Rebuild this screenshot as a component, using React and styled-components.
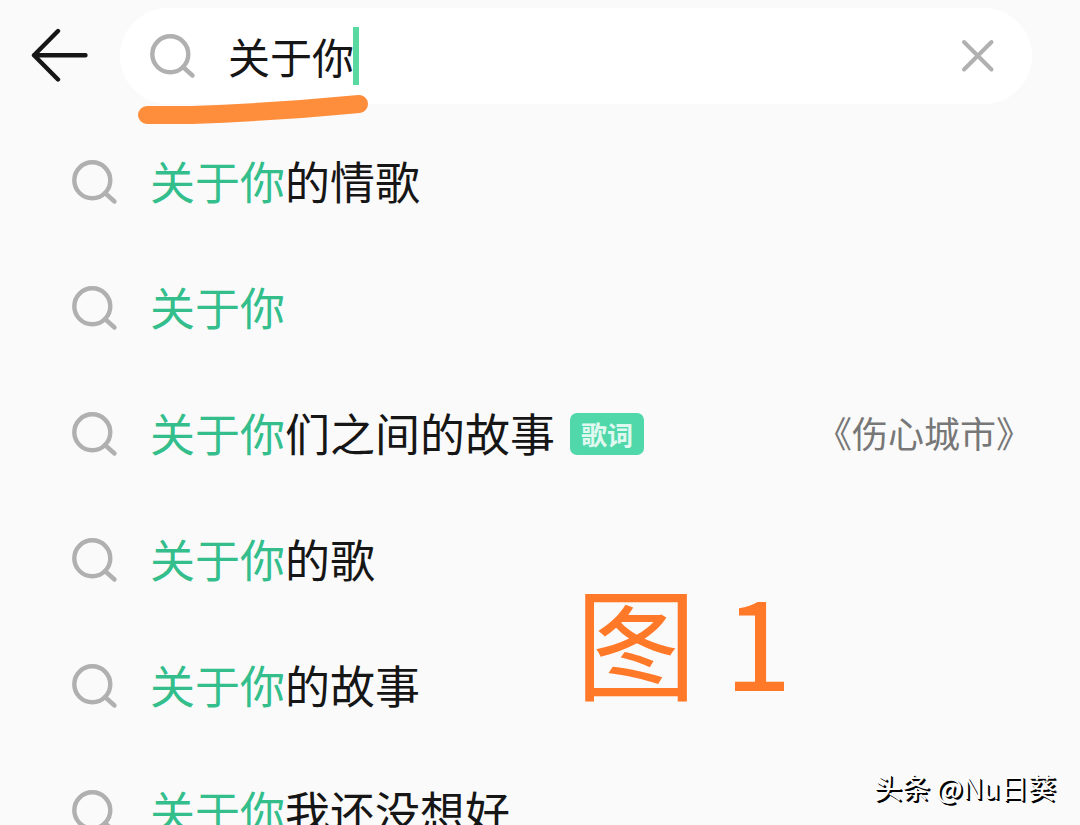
import React, { useState } from 'react';
import styled, { createGlobalStyle } from 'styled-components';

const GlobalStyle = createGlobalStyle`
  * {
    box-sizing: border-box;
  }

  body {
    margin: 0;
    background: #fafafa;
    color: #161616;
    font-family: "Noto Sans CJK SC", "Noto Sans", sans-serif;
  }
`;

const Page = styled.div`
  position: relative;
  height: 100vh;
  overflow: hidden;
`;

const Header = styled.header`
  display: flex;
  align-items: center;
  gap: 30px;
  padding: 8px 48px 15px 30px;
`;

const IconButton = styled.button`
  display: flex;
  padding: 0;
  border: 0;
  background: none;
  cursor: pointer;
`;

const SearchBox = styled.form`
  display: flex;
  flex: 1;
  align-items: center;
  height: 96px;
  padding: 0 36px 0 28px;
  border-radius: 48px;
  background: #fff;
`;

const Field = styled.label`
  display: flex;
  flex: 1;
  align-items: center;
  gap: 32px;
`;

const Typed = styled.span`
  display: flex;
  align-items: center;
`;

const SearchInput = styled.input`
  width: ${props => props.$chars}em;
  height: 60px;
  padding: 0 0 2px;
  border: 0;
  outline: 0;
  background: none;
  color: inherit;
  font: inherit;
  font-size: 42px;
  caret-color: transparent;
`;

const Caret = styled.span`
  width: 6px;
  height: 58px;
  margin-left: -1px;
  background: #57d9a0;
`;

const List = styled.ul`
  margin: 0;
  padding: 0;
  list-style: none;
`;

const Row = styled.a`
  display: flex;
  align-items: center;
  height: 126px;
  padding: 0 48px 0 70px;
  color: inherit;
  text-decoration: none;
`;

const Title = styled.span`
  margin-left: 32px;
  padding-bottom: 2px;
  font-size: 45px;
  line-height: 64px;
  white-space: nowrap;
`;

const Match = styled.span`
  color: #34be8c;
`;

const Badge = styled.span`
  margin-left: 15px;
  padding: 0 11px;
  border-radius: 7px;
  background: #50d8ab;
  color: #e0f9f0;
  font-size: 26px;
  font-weight: 700;
  line-height: 42px;
`;

const Song = styled.span`
  margin-left: auto;
  padding-bottom: 4px;
  color: #777;
  font-size: 36px;
  line-height: 52px;
`;

const Stroke = styled.svg`
  position: absolute;
  top: 92px;
  left: 136px;
`;

const Caption = styled.div`
  position: absolute;
  top: 550px;
  left: 575px;
  color: #ff7928;
  font-size: 122px;
  line-height: 176px;
  white-space: nowrap;
`;

const Watermark = styled.div`
  position: absolute;
  right: 24px;
  bottom: 18px;
  color: #fff;
  font-size: 28px;
  line-height: 40px;
  text-shadow: 1px 1px 0 #000, 2px 2px 0 #000;
`;

const SearchIcon = () => (
  <svg width="48" height="48" viewBox="0 0 48 48" fill="none" stroke="#b0b0b0" strokeWidth="4.4" aria-hidden="true">
    <circle cx="22.3" cy="22.3" r="18" />
    <path d="M35 35 44.500 43.500" strokeLinecap="round" />
  </svg>
);

const BackIcon = () => (
  <svg width="60" height="56" viewBox="0 0 60 56" fill="none" stroke="#161616" strokeWidth="4.4" strokeLinecap="round" strokeLinejoin="round" aria-hidden="true">
    <path d="M28 3 4 27.3 28 51.5M4 27.3H55.5" />
  </svg>
);

const ClearIcon = () => (
  <svg width="36" height="36" viewBox="0 0 36 36" fill="none" stroke="#b0b0b0" strokeWidth="4" strokeLinecap="round" aria-hidden="true">
    <path d="M4 4 31.5 31.5M31.5 4 4 31.5" />
  </svg>
);

const keyword = '关于你';

const suggestions = [
  { rest: '的情歌' },
  { rest: '' },
  { rest: '们之间的故事', badge: '歌词', song: '《伤心城市》' },
  { rest: '的歌' },
  { rest: '的故事' },
  { rest: '我还没想好' },
];

const App = () => {
  const [query, setQuery] = useState(keyword);

  return (
    <Page>
      <GlobalStyle />
      <Header>
        <IconButton type="button" aria-label="返回">
          <BackIcon />
        </IconButton>
        <SearchBox onSubmit={e => e.preventDefault()}>
          <Field>
            <SearchIcon />
            <Typed>
              <SearchInput
                aria-label="搜索"
                $chars={query.length}
                value={query}
                onChange={e => setQuery(e.target.value)}
              />
              <Caret />
            </Typed>
          </Field>
          <IconButton type="button" aria-label="清除" onClick={() => setQuery('')}>
            <ClearIcon />
          </IconButton>
        </SearchBox>
      </Header>
      <List>
        {suggestions.map(item => (
          <li key={item.rest}>
            <Row href="#">
              <SearchIcon />
              <Title><Match>{keyword}</Match>{item.rest}</Title>
              {item.badge && <Badge>{item.badge}</Badge>}
              {item.song && <Song>{item.song}</Song>}
            </Row>
          </li>
        ))}
      </List>
      <Stroke width="236" height="36" viewBox="0 0 236 36" fill="none" aria-hidden="true">
        <path d="M11 23H56Q140 20 223 12" stroke="#ff8e3c" strokeWidth="18" strokeLinecap="round" />
      </Stroke>
      <Caption>图 1</Caption>
      <Watermark>头条 @Nu日葵</Watermark>
    </Page>
  );
};

export default App;
